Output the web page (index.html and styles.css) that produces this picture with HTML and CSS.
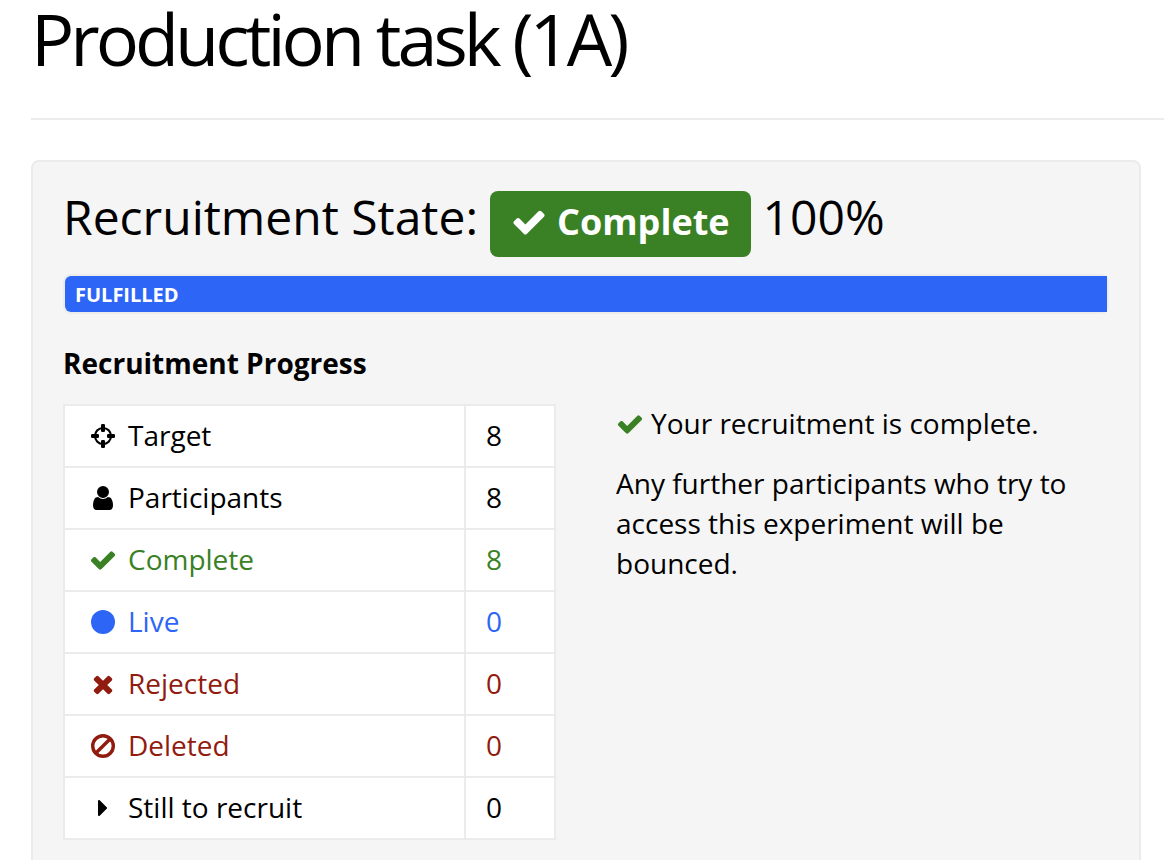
FILE: index.html
```html
<!DOCTYPE html>
<html lang="en">
<head>
<meta charset="utf-8">
<title>Production task (1A)</title>
<link rel="stylesheet" href="styles.css">
</head>
<body>
<svg class="sprite" aria-hidden="true">
  <symbol id="check" viewBox="0 0 1792 1792"><path d="M1671 566q0 40-28 68l-724 724-136 136q-28 28-68 28t-68-28l-136-136-362-362q-28-28-28-68t28-68l136-136q28-28 68-28t68 28l294 295 656-657q28-28 68-28t68 28l136 136q28 28 28 68z"/></symbol>
  <symbol id="user" viewBox="0 0 1792 1792"><path d="M1536 1399q0 109-62.500 187t-150.500 78h-854q-88 0-150.500-78t-62.500-187q0-85 8.500-160.500t31.500-152 58.500-131 94-89 134.500-34.500q131 128 313 128t313-128q76 0 134.500 34.500t94 89 58.500 131 31.500 152 8.500 160.500zm-256-887q0 159-112.500 271.500t-271.500 112.500-271.500-112.500-112.500-271.500 112.500-271.500 271.500-112.500 271.500 112.500 112.500 271.500z"/></symbol>
  <symbol id="times" viewBox="0 0 1792 1792"><path d="M1490 1322q0 40-28 68l-136 136q-28 28-68 28t-68-28l-294-294-294 294q-28 28-68 28t-68-28l-136-136q-28-28-28-68t28-68l294-294-294-294q-28-28-28-68t28-68l136-136q28-28 68-28t68 28l294 294 294-294q28-28 68-28t68 28l136 136q28 28 28 68t-28 68l-294 294 294 294q28 28 28 68z"/></symbol>
  <symbol id="caret" viewBox="0 0 1792 1792"><path d="M1152 896q0 26-19 45l-448 448q-19 19-45 19t-45-19-19-45v-896q0-26 19-45t45-19 45 19l448 448q19 19 19 45z"/></symbol>
  <symbol id="circle" viewBox="0 0 28 28"><circle cx="14" cy="14" r="12"/></symbol>
  <symbol id="ban" viewBox="0 0 28 28"><g fill="none" stroke="currentColor" stroke-width="3.400"><circle cx="14" cy="14" r="10.300"/><path d="M6.700 21.300l14.600-14.600"/></g></symbol>
  <symbol id="crosshairs" viewBox="0 0 28 28"><circle cx="14" cy="14" r="8" fill="none" stroke="currentColor" stroke-width="2.200"/><rect x="12" y="2" width="4" height="8" rx="1.200"/><rect x="12" y="18" width="4" height="8" rx="1.200"/><rect x="2" y="12" width="8" height="4" rx="1.200"/><rect x="18" y="12" width="8" height="4" rx="1.200"/></symbol>
</svg>

<header class="page-header">
  <h1 class="page-title">Production task (1A)</h1>
</header>

<main class="panel">
  <h2 class="state">
    <span>Recruitment State:</span>
    <span class="badge"><svg class="badge-icon" aria-hidden="true"><use href="#check"/></svg>Complete</span>
    <span>100%</span>
  </h2>
  <div class="progress"><div class="progress-fill">FULFILLED</div></div>
  <h3 class="subtitle">Recruitment Progress</h3>
  <div class="columns">
    <table class="counts">
      <tbody>
        <tr><th scope="row"><svg class="icon" aria-hidden="true"><use href="#crosshairs"/></svg>Target</th><td>8</td></tr>
        <tr><th scope="row"><svg class="icon" aria-hidden="true"><use href="#user"/></svg>Participants</th><td>8</td></tr>
        <tr class="success"><th scope="row"><svg class="icon" aria-hidden="true"><use href="#check"/></svg>Complete</th><td>8</td></tr>
        <tr class="live"><th scope="row"><svg class="icon" aria-hidden="true"><use href="#circle"/></svg>Live</th><td>0</td></tr>
        <tr class="danger"><th scope="row"><svg class="icon" aria-hidden="true"><use href="#times"/></svg>Rejected</th><td>0</td></tr>
        <tr class="danger"><th scope="row"><svg class="icon" aria-hidden="true"><use href="#ban"/></svg>Deleted</th><td>0</td></tr>
        <tr><th scope="row"><svg class="icon" aria-hidden="true"><use href="#caret"/></svg>Still to recruit</th><td>0</td></tr>
      </tbody>
    </table>
    <div class="message">
      <p><svg class="message-icon success" aria-hidden="true"><use href="#check"/></svg>Your recruitment is complete.</p>
      <p>Any further participants who try to access this experiment will be bounced.</p>
    </div>
  </div>
</main>
</body>
</html>
```
FILE: styles.css
```css
* {
  box-sizing: border-box;
}

body {
  margin: 0;
  padding-left: 31px;
  background: #fff;
  color: #000;
  font-family: "Open Sans", "Noto Sans", sans-serif;
  font-size: 28px;
  line-height: 40px;
}

h1, h2, h3, p {
  margin: 0;
}

svg {
  fill: currentColor;
}

.sprite {
  display: none;
}

.page-header {
  padding-bottom: 42px;
  border-bottom: 2px solid #ececec;
}

.page-title {
  font-size: 72px;
  font-weight: 400;
  line-height: 76px;
  letter-spacing: -4px;
}

.panel {
  margin: 40px 23px 40px 0;
  padding: 29px 30px 30px;
  border: 2px solid #ebebeb;
  border-radius: 8px;
  background: #f5f5f5;
}

.state {
  display: flex;
  flex-wrap: wrap;
  align-items: baseline;
  gap: 12px;
  font-size: 48px;
  font-weight: 400;
  line-height: 52px;
}

.badge {
  padding: 6px 21px 10px;
  border-radius: 8px;
  background: #398124;
  color: #fff;
  font-size: 36px;
  font-weight: 700;
  line-height: 50px;
}

.badge-icon {
  width: 36px;
  height: 36px;
  margin-right: 10px;
  vertical-align: -5px;
}

.progress {
  margin-top: 17px;
  border: 2px solid #ececec;
  border-radius: 8px;
}

.progress-fill {
  padding: 2px 10px 0;
  border-radius: 6px 0 0 6px;
  background: #2d66f6;
  color: #fff;
  font-size: 20px;
  font-weight: 700;
  line-height: 34px;
}

.subtitle {
  margin: 29px 0 21px;
  font-size: 28px;
  font-weight: 700;
  line-height: 40px;
}

.columns {
  display: grid;
  grid-template-columns: 1fr 1fr;
  align-items: start;
  gap: 60px;
}

.counts {
  width: 100%;
  border-collapse: collapse;
  background: #fff;
}

.counts th,
.counts td {
  padding: 9px 20px 11px;
  border: 2px solid #ebebeb;
  font-weight: 400;
  text-align: left;
}

.counts td {
  width: 90px;
}

.icon {
  width: 28px;
  height: 28px;
  margin: 0 11px 0 4px;
  vertical-align: -4px;
}

.message {
  display: grid;
  gap: 20px;
  margin-top: -1px;
}

.message-icon {
  width: 28px;
  height: 28px;
  margin-right: 7px;
  vertical-align: -4px;
}

.success {
  color: #398124;
}

.live {
  color: #2d66f6;
}

.danger {
  color: #921b10;
}
```
